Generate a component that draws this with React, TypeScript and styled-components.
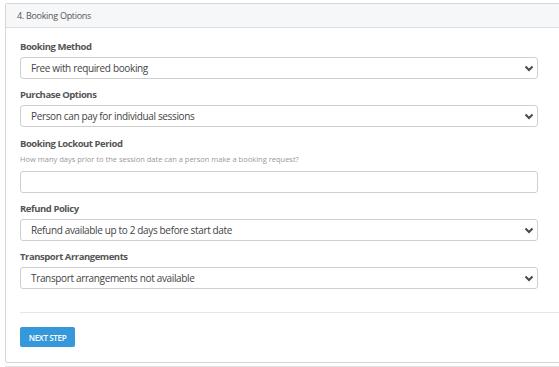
import React from "react";
import styled, { createGlobalStyle } from "styled-components";

const Global = createGlobalStyle`
  html, body { margin: 0; padding: 0; background: #ffffff; }
  body { font-family: "Open Sans", "Liberation Sans", sans-serif; color: #555; overflow: hidden; }
  * { box-sizing: border-box; }
`;

const Page = styled.div`
  padding: 3px 0 0 5px;
  width: 559px;
  height: 367px;
  overflow: hidden;
`;

const Card = styled.section`
  width: 620px;
  border: 1px solid #d6d6d6;
  border-radius: 2px;
  background: #fff;
`;

const NextCard = styled.div`
  width: 620px;
  height: 4px;
  margin-top: 3px;
  border-top: 1px solid #e2e2e2;
`;

const Header = styled.header`
  height: 24px;
  display: flex;
  align-items: center;
  padding-left: 11px;
  background: #f6f7f9;
  border-bottom: 1px solid #dcdcdc;
  font-size: 9px;
  letter-spacing: -0.3px;
  color: #555;
`;

const Body = styled.div`
  display: flex;
  flex-direction: column;
  align-items: flex-start;
  padding: 12px 0 15px 14px;
`;

const Group = styled.div<{ $top?: number }>`
  width: 518px;
  margin-top: ${(p) => p.$top ?? 0}px;
  margin-bottom: 9px;
  display: flex;
  flex-direction: column;
`;

const Label = styled.label`
  display: block;
  font-size: 9.5px;
  font-weight: 700;
  letter-spacing: -0.45px;
  line-height: 13px;
  color: #555;
  margin-bottom: 4px;
`;

const Hint = styled.div`
  font-size: 7.5px;
  line-height: 10px;
  color: #999;
  margin: 0 0 7px;
`;

const Field = styled.div`
  position: relative;
  height: 22px;
  border: 1px solid #cfcfcf;
  border-radius: 3px;
  background: #fff;
  display: flex;
  align-items: center;
  padding-left: 10px;
  font-size: 10px;
  letter-spacing: -0.35px;
  color: #444;
`;

const Chevron = styled.svg`
  position: absolute;
  right: 3px;
  top: 7px;
`;

const Divider = styled.hr`
  align-self: stretch;
  border: 0;
  border-top: 1px solid #e6e6e6;
  margin: 14px 0 14px;
`;

const Button = styled.button`
  height: 20px;
  width: 55px;
  border: 0;
  border-radius: 2px;
  background: #3498db;
  color: #fff;
  font-family: "Open Sans", "Liberation Sans", sans-serif;
  font-size: 8px;
  font-weight: 600;
  letter-spacing: -0.35px;
  padding: 0;
  text-transform: uppercase;
`;

const Select = ({ value }: { value: string }) => (
  <Field>
    {value}
    <Chevron width="10" height="7" viewBox="0 0 10 7">
      <polyline points="1.5,1.5 5,5 8.5,1.5" fill="none" stroke="#4a4a4a" strokeWidth="2" />
    </Chevron>
  </Field>
);

export default function App() {
  return (
    <>
      <Global />
      <Page>
        <Card>
          <Header>4. Booking Options</Header>
          <Body>
            <Group>
              <Label>Booking Method</Label>
              <Select value="Free with required booking" />
            </Group>
            <Group>
              <Label>Purchase Options</Label>
              <Select value="Person can pay for individual sessions" />
            </Group>
            <Group $top={1}>
              <Label>Booking Lockout Period</Label>
              <Hint>How many days prior to the session date can a person make a booking request?</Hint>
              <Field />
            </Group>
            <Group>
              <Label>Refund Policy</Label>
              <Select value="Refund available up to 2 days before start date" />
            </Group>
            <Group>
              <Label>Transport Arrangements</Label>
              <Select value="Transport arrangements not available" />
            </Group>
            <Divider />
            <Button>Next Step</Button>
          </Body>
        </Card>
        <NextCard />
      </Page>
    </>
  );
}
